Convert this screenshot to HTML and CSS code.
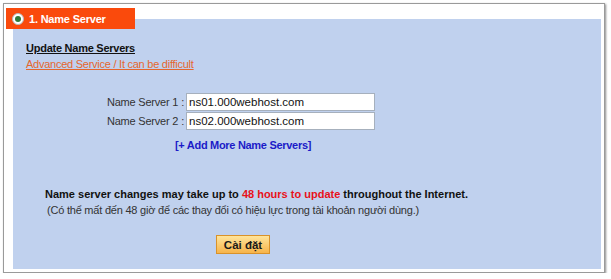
FILE: index.html
```html
<!DOCTYPE html>
<html>
<head>
<meta charset="utf-8">
<link rel="stylesheet" href="styles.css">
</head>
<body>
<div class="frame">
  <div class="tab">
    <span class="radio"><span class="dot"></span></span>
    <span class="tab-title">1. Name Server</span>
  </div>
  <div class="panel">
    <div class="heading">Update Name Servers</div>
    <a class="adv" href="#">Advanced Service / It can be difficult</a>
    <div class="form">
      <div class="row">
        <label class="lbl">Name Server 1 :</label>
        <input class="inp" type="text" value="ns01.000webhost.com">
      </div>
      <div class="row">
        <label class="lbl">Name Server 2 :</label>
        <input class="inp" type="text" value="ns02.000webhost.com">
      </div>
    </div>
    <a class="addmore" href="#">[+ Add More Name Servers]</a>
    <div class="note">Name server changes may take up to <span class="red">48 hours to update</span> throughout the Internet.</div>
    <div class="note2">(Có thể mất đến 48 giờ để các thay đổi có hiệu lực trong tài khoản người dùng.)</div>
    <button class="btn" type="button">Cài đặt</button>
  </div>
</div>
</body>
</html>
```

FILE: styles.css
```css
html, body {
  margin: 0;
  padding: 0;
  background: #ffffff;
  font-family: "Liberation Sans", Arial, sans-serif;
  font-size: 11px;
}
.frame {
  position: relative;
  margin: 3px 0 0 3px;
  width: 602px;
  height: 270px;
  border: 1px solid #9a9a9a;
  box-shadow: 1px 1px 2px rgba(0,0,0,0.45);
  background: #ffffff;
  padding: 15px 3px 3px 9px;
  box-sizing: border-box;
}
.tab {
  position: absolute;
  left: 2px;
  top: 4px;
  width: 129px;
  height: 21px;
  background: #fa4a0c;
  display: flex;
  align-items: center;
  z-index: 2;
}
.radio {
  margin-left: 6px;
  width: 12px;
  height: 12px;
  border-radius: 50%;
  background: #ffffff;
  border: 1px solid #b8b8b8;
  box-sizing: border-box;
  display: flex;
  align-items: center;
  justify-content: center;
}
.dot {
  width: 6px;
  height: 6px;
  border-radius: 50%;
  background: #2f7a3a;
}
.tab-title {
  margin-left: 5px;
  color: #ffffff;
  font-weight: bold;
  font-size: 11px;
  letter-spacing: -0.2px;
}
.panel {
  height: 100%;
  background: #c0d1ee;
  padding: 21px 13px 0 13px;
  box-sizing: border-box;
}
.heading {
  line-height: 16px;
  font-weight: bold;
  color: #111111;
  text-decoration: underline;
  letter-spacing: -0.25px;
}
.adv {
  display: block;
  line-height: 16px;
  color: #e4672e;
  text-decoration: underline;
  letter-spacing: -0.25px;
}
.form {
  margin-top: 21px;
  display: flex;
  flex-direction: column;
  gap: 1px;
}
.row {
  display: flex;
  align-items: center;
  height: 18px;
}
.lbl {
  width: 160px;
  text-align: right;
  padding-right: 2px;
  box-sizing: border-box;
  color: #333333;
  letter-spacing: -0.2px;
}
.inp {
  width: 189px;
  height: 18px;
  box-sizing: border-box;
  border: 1px solid #a6b0bd;
  background: #ffffff;
  font-family: "Liberation Sans", Arial, sans-serif;
  font-size: 11.5px;
  color: #111111;
  padding: 0 2px;
  margin: 0;
}
.addmore {
  display: block;
  margin: 7px 0 0 149px;
  line-height: 16px;
  color: #1b1bc8;
  font-weight: bold;
  text-decoration: none;
  letter-spacing: -0.3px;
}
.note {
  margin: 33px 0 0 19px;
  line-height: 16px;
  font-weight: bold;
  color: #111111;
}
.red {
  color: #e8111a;
}
.note2 {
  margin: 0 0 0 21px;
  line-height: 16px;
  color: #333333;
  letter-spacing: -0.22px;
}
.btn {
  display: block;
  margin: 17px 0 0 190px;
  width: 54px;
  height: 19px;
  padding: 0;
  border: 1px solid #d9922a;
  background: linear-gradient(#ffe49a, #f7b44a);
  font-family: "Liberation Sans", Arial, sans-serif;
  font-size: 11.5px;
  font-weight: bold;
  color: #1a1a1a;
  cursor: pointer;
}
```
